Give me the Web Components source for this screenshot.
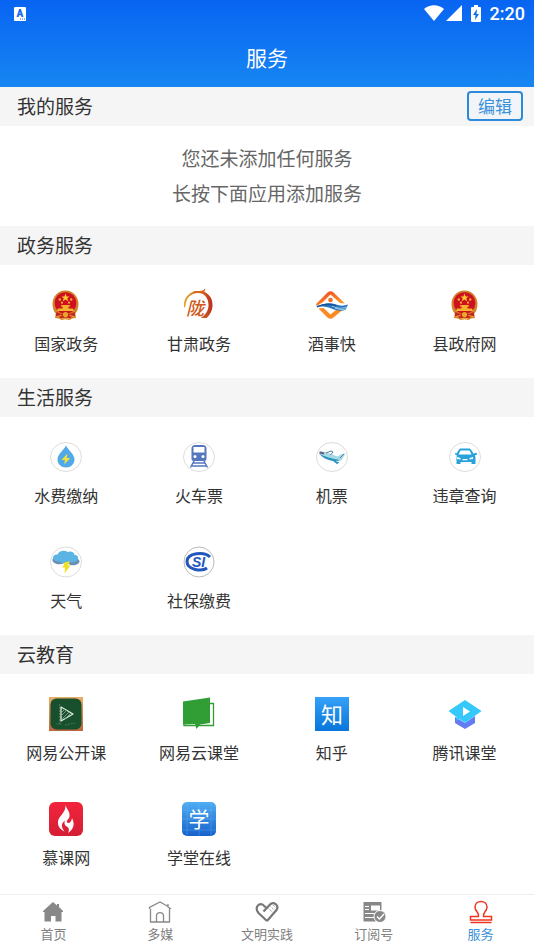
<!DOCTYPE html>
<html lang="zh-CN">
<head>
<meta charset="utf-8">
<meta name="viewport" content="width=device-width, initial-scale=1">
<title>服务</title>
<style>
  body {
    margin: 0;
    background: #fff;
    color: #333;
    font-family: "Noto Sans CJK SC", "Noto Sans", sans-serif;
  }
</style>
</head>
<body>

<!-- shared by both government entries -->
<svg width="0" height="0" style="display: none" aria-hidden="true">
  <symbol id="emblem" viewBox="0 0 34 34">
    <path d="M16.500 2.500C9 2.500 3.500 8.500 3.500 16c0 4.500 1.500 7.500 3.500 10l-1 4 4 .5 2.500 1.500 4-.7 4 .7 2.500-1.500 4-.5-1-4c2-2.500 3.500-5.500 3.500-10C29.500 8.500 24 2.500 16.500 2.500z" fill="#d0832a"/>
    <circle cx="16.500" cy="15" r="10.800" fill="#cf1020"/>
    <path d="M16.500 5.500l1.100 2.900h3l-2.300 1.900.9 2.900-2.700-1.700-2.700 1.700.9-2.900-2.300-1.900h3z" fill="#fccb2f"/>
    <g fill="#f3b32b">
      <circle cx="10.800" cy="11.500" r="1.200"/><circle cx="22.200" cy="11.500" r="1.200"/>
      <circle cx="13" cy="14.700" r="1.100"/><circle cx="20" cy="14.700" r="1.100"/>
      <path d="M12.500 17h8l1 1.500h-10zM13.500 18.500h6v2h-6zM9 20.500h15l1 2.500H8z"/>
    </g>
    <path d="M7.500 24l4.500 2 4.500-1 4.500 1 4.500-2 1 3.500-4 1.500-2 2-4-1-4 1-2-2-4-1.500z" fill="#c8251f"/>
    <circle cx="16.500" cy="26.500" r="2.600" fill="#e9a52d"/>
    <path d="M8 28.500l4.500-1M25 28.500l-4.500-1M12 31l4.500-1 4.500 1" fill="none" stroke="#efb33a"/>
  </symbol>
</svg>

<services-app>
  <app-header slot="header">服务</app-header>

  <service-section heading="我的服务">
    <edit-button slot="action">编辑</edit-button>
    <empty-note slot="note">
      <span>您还未添加任何服务</span>
      <span>长按下面应用添加服务</span>
    </empty-note>
  </service-section>

  <service-section heading="政务服务">
    <service-item label="国家政务">
      <svg viewBox="0 0 34 34"><use href="#emblem"/></svg>
    </service-item>
    <service-item label="甘肃政务">
      <svg viewBox="0 0 34 34">
        <defs><linearGradient id="ring"><stop offset="0" stop-color="#e2a32b"/><stop offset=".6" stop-color="#d66a20"/><stop offset="1" stop-color="#b92d1b"/></linearGradient></defs>
        <path d="M2 18C1.500 9 8 3 17 3c2 0 4 .3 5.500 1C27 6 30.500 10 30.500 17c0 6-3 10.500-6 13h-6c5-3 8-7.500 8-13C26.500 9.500 22 5 16 5 9 5 4 10 3.500 18L2.500 20z" fill="url(#ring)"/>
        <path d="M11 4.500c5-2 8 .5 11-2l-1 3" fill="none" stroke="#d8651e" stroke-width="1.500"/>
        <text x="4" y="27" font-size="18" font-weight="500" font-style="italic" fill="#cf5a20">陇</text>
      </svg>
    </service-item>
    <service-item label="酒事快">
      <svg viewBox="0 0 34 34">
        <defs><linearGradient id="diamond" x2=".7" y2="1"><stop offset="0" stop-color="#ee3f24"/><stop offset="1" stop-color="#ffa022"/></linearGradient></defs>
        <path d="M12.500 4.500Q15.500 2 18.500 4.500L30 15.500l-5-.5-9.500-8.500-8 8L1.500 18q-1-1.500.5-3z" fill="url(#diamond)"/>
        <path d="M3.500 20.500l5-.5 7 6.500 6-5 6.500 0-9.500 8q-3 2.500-6 0z" fill="#fb8a22"/>
        <circle cx="15.500" cy="12" r="2.300" fill="#f16d23"/>
        <path d="M1 19c7-4 14-5 20-2.500 4 1.500 8 1.500 12 0l-2.500 5.500c-5 1.500-9 .5-14-1.500-6-2-10-2.500-15.500-1.500z" fill="#2876bd"/>
        <path d="M17 18c5 2.500 10 3 14.500 1M20 20c4 1.500 8 2 11 1" fill="none" stroke="#b8def0" stroke-width=".8"/>
        <path d="M2 18.800c7-3 13-3.500 19-1" fill="none" stroke="#164f9d" stroke-width="1.500"/>
      </svg>
    </service-item>
    <service-item label="县政府网">
      <svg viewBox="0 0 34 34"><use href="#emblem"/></svg>
    </service-item>
  </service-section>

  <service-section heading="生活服务">
    <service-item label="水费缴纳">
      <svg viewBox="0 0 34 34">
        <ellipse cx="17" cy="17" rx="15.500" ry="14.500" fill="#fff" stroke="#ddd"/>
        <path d="M17 5.500c2 4.500 8.500 8.500 8.500 14 0 4.500-3.800 8-8.500 8s-8.500-3.500-8.500-8c0-5.500 6.500-9.500 8.500-14z" fill="#52a9e8"/>
        <path d="M18.500 13.500l-6 6.500h3.500l-.8 4.500 6-6.500h-3.500z" fill="#f4e13c"/>
      </svg>
    </service-item>
    <service-item label="火车票">
      <svg viewBox="0 0 34 34">
        <ellipse cx="17" cy="17" rx="15.500" ry="14.500" fill="#fff" stroke="#ddd"/>
        <path d="M13 5h8c2 0 3.500 1.500 3.500 3.500V19c0 1-1 2-2 2h-11c-1 0-2-1-2-2V8.500C9.500 6.500 11 5 13 5z" fill="#5477bd"/>
        <path d="M11.500 7h11v5.500h-11z" fill="#fff"/>
        <circle cx="13" cy="16.500" r="1.500" fill="#fff"/><circle cx="21" cy="16.500" r="1.500" fill="#fff"/>
        <path d="M12 21l-3.500 6.500M22 21l3.500 6.500M11.500 23h11M10 26h14" fill="none" stroke="#5477bd" stroke-width="1.500"/>
      </svg>
    </service-item>
    <service-item label="机票">
      <svg viewBox="0 0 34 34">
        <ellipse cx="17" cy="17" rx="15.500" ry="14.500" fill="#fff" stroke="#ddd"/>
        <path d="M4 12c1.500-1.500 3.500-.5 6 0l12.500 4.500 4-2.500 4-.5-4 6.500c-2 1.500-4 1-6 .5L8 16z" fill="#a5d8e2"/>
        <path d="M4 13.500c5 3 13 5.500 21 6.500-5 2.500-12.500.5-18-3.500zM16 19.500l8.500 3-2.500 1.500z" fill="#258fbf"/>
        <path d="M11 13l5-2 2 1-2.500 3M25 18l4-4" fill="none" stroke="#4f7f9f"/>
        <path d="M4.500 12.500l4.500 1" stroke="#625f85" stroke-width="2"/>
      </svg>
    </service-item>
    <service-item label="违章查询">
      <svg viewBox="0 0 34 34">
        <ellipse cx="17" cy="17" rx="15.500" ry="14.500" fill="#fff" stroke="#ddd"/>
        <path d="M8.500 13.500L11 9.500C11.500 9 12 8.500 13 8.500h8c1 0 1.500.5 2 1l2.500 4 3-.8.5 1.800-2 1 .5 2V24h-4v-2h-11v2h-4v-6.500l.5-2-2-1 .5-1.800z" fill="#27a2dc"/>
        <path d="M12.500 10.500h9l2 4h-13zM9 17l3.500 1v1.500L9 19zM25 17l-3.500 1v1.500L25 19zM14.500 19h5v1.300h-5z" fill="#fff"/>
      </svg>
    </service-item>
    <service-item label="天气">
      <svg viewBox="0 0 34 34">
        <ellipse cx="17" cy="17" rx="15.500" ry="15" fill="#fff" stroke="#ddd"/>
        <path d="M17 15c3-2 13-3 13.500 1 0 3-4 5-9.500 4zM3.500 14c3-2 8 0 11 4.500-4 2-12 0-11-4.500z" fill="#6b8fae"/>
        <path d="M4 13c0-2.500 2-4 4.500-3.500 1-3.500 7-5 10-2.500 3-1.500 7 0 7 3 3 0 4 2 3.500 4-.5 2.500-5 4-10 3-3 2-7.500 1.500-8.500-.5-3.500.5-6.500-1-6.500-3.500z" fill="#5bb4e3"/>
        <path d="M16 17l5-.5-2 4h2.500L15.500 28.500l.5-6H13.500z" fill="#f2df25"/>
      </svg>
    </service-item>
    <service-item label="社保缴费">
      <svg viewBox="0 0 34 34">
        <circle cx="17" cy="17" r="15" fill="#fff" stroke="#bbb"/>
        <path d="M28 12C22 6 5 8 5 16.500 5 25 20 27 25 23" fill="none" stroke="#2357bd" stroke-width="3"/>
        <text x="10" y="22" font-family="Liberation Sans, sans-serif" font-size="14" font-weight="700" font-style="italic" fill="#2357bd">SI</text>
      </svg>
    </service-item>
  </service-section>

  <service-section heading="云教育">
    <service-item label="网易公开课">
      <svg viewBox="0 0 34 34">
        <defs><linearGradient id="wood" x2="0" y2="1"><stop offset="0" stop-color="#e9ae68"/><stop offset="1" stop-color="#b9653e"/></linearGradient></defs>
        <path d="M0 0h34v34H0z" fill="url(#wood)"/>
        <rect x="1.500" y="1.500" width="31" height="31" rx="6" fill="#184f2d"/>
        <path d="M12 10v14l12-7z" fill="none" stroke="#dce9df" stroke-width="1.300" stroke-linejoin="round"/>
        <path d="M13 15l3-3M13 18l5-5M13 22l7-7M16 22l6-6" stroke="#8dac95" stroke-width=".8"/>
        <path d="M10.500 7v20M7.500 27h5M16 28l10-2" stroke="#55805f" stroke-width=".8" stroke-dasharray="2 1"/>
      </svg>
    </service-item>
    <service-item label="网易云课堂">
      <svg viewBox="0 0 34 34">
        <path d="M27 6.500h4.500V28.500H2v-3" fill="none" stroke="#319e35" stroke-width="1.300"/>
        <path d="M1 4.500L28 .5v25.500l-10 1.500-3.500 4.500-1.500-5L1 27.500z" fill="#319e35"/>
      </svg>
    </service-item>
    <service-item label="知乎">
      <svg viewBox="0 0 34 34">
        <defs><linearGradient id="sky" x2="0" y2="1"><stop offset="0" stop-color="#36a1f8"/><stop offset="1" stop-color="#0876da"/></linearGradient></defs>
        <path d="M0 0h34v34H0z" fill="url(#sky)"/>
        <text x="17" y="26" text-anchor="middle" font-size="22" fill="#fff">知</text>
      </svg>
    </service-item>
    <service-item label="腾讯课堂">
      <svg viewBox="0 0 34 34">
        <path d="M7 20l10 6 10-7v7l-10 6-10-6z" fill="#637cf4"/>
        <path d="M17 3l16.500 11L17 26l-6-4-2.500 2v-4L.5 14z" fill="#35c8fa"/>
        <path d="M15 10v9l7-4.500z" fill="#fff"/>
      </svg>
    </service-item>
    <service-item label="慕课网">
      <svg viewBox="0 0 34 34">
        <defs><linearGradient id="ember" x2="0" y2="1"><stop offset="0" stop-color="#f2243c"/><stop offset="1" stop-color="#d51e34"/></linearGradient></defs>
        <rect width="34" height="34" rx="6" fill="url(#ember)"/>
        <path d="M16.500 3c1 4 4.500 6 4 11 0 3-3.500 4-2.500 6.500 2 1.500 4.500-.5 5-4.500 3 6 2 11-4 15 1.500-3 1-5-.5-6-2-1-4-3-2.500-6.500-4 3-4 6.500-.5 11-4-2-7-5-6.500-10C9.500 14 17 11 16.500 3z" fill="#fff"/>
      </svg>
    </service-item>
    <service-item label="学堂在线">
      <svg viewBox="0 0 34 34">
        <defs><linearGradient id="azure" x2="0" y2="1"><stop offset="0" stop-color="#50adf3"/><stop offset="1" stop-color="#1662cb"/></linearGradient></defs>
        <rect width="34" height="34" rx="5" fill="url(#azure)"/>
        <path d="M5 0v34M29 0v34M17 0v34M0 8h34M0 17h34M0 28h34" stroke="#78c2f7" stroke-width=".5" opacity=".6"/>
        <text x="17" y="25" text-anchor="middle" font-size="21" fill="#fff">学</text>
      </svg>
    </service-item>
  </service-section>

  <tab-bar slot="footer">
    <tab-link label="首页">
      <svg viewBox="0 0 24 24"><path d="M12 2L2 11v1h1.500v9.500H10V16h4.500v5.500h6V12H22v-1l-4-4V4h-2v1.500z" fill="#888"/></svg>
    </tab-link>
    <tab-link label="多媒">
      <svg viewBox="0 0 24 24"><path d="M1.500 9V7.500L12 2l8 4.500V4M20 5v2l2.500 1.500V9M2.500 9v13h19V8.500M8.500 22v-6c0-4.500 7-4.500 7 0v6" fill="none" stroke="#888" stroke-width="1.300"/></svg>
    </tab-link>
    <tab-link label="文明实践">
      <svg viewBox="0 0 24 24">
        <path d="M12 21L3.500 13C-.5 8 3 3 7.500 4.500l4 3.500" fill="none" stroke="#777" stroke-width="2.200" stroke-linejoin="round"/>
        <path d="M8.500 11.500l6-6.500c4-4.500 10 .5 7 5L12 21" fill="none" stroke="#777" stroke-width="2.200"/>
        <path d="M13.500 8.500l4.500 4M15.500 6.500l4.500 4M18 5l3 3" stroke="#888" stroke-dasharray="1 1"/>
      </svg>
    </tab-link>
    <tab-link label="订阅号">
      <svg viewBox="0 0 24 24">
        <path d="M1.500 2h18v12l-6 7.500h-12z" fill="#888"/>
        <path d="M9 5.500h9v5H9zM3 6h4v1H3zM3 9h4v1H3zM3 13h14v1H3zM3 17h9v1H3z" fill="#fff"/>
        <circle cx="18" cy="16.500" r="6" fill="#888" stroke="#fff"/>
        <path d="M15 16.500l2.500 2.500 4.500-5" fill="none" stroke="#fff" stroke-width="1.500"/>
      </svg>
    </tab-link>
    <tab-link label="服务" active>
      <svg viewBox="0 0 24 24"><path d="M9.500 16.500c1-4-3.500-5-3.500-9.500 0-7.500 12-7.500 12 0 0 4.500-4.500 5.500-3.500 9.500h8V20h-21v-3.500zM1.500 22.500h21" fill="none" stroke="#ee3620" stroke-width="1.500"/></svg>
    </tab-link>
  </tab-bar>
</services-app>

<script>
class ServicesApp extends HTMLElement {
  constructor() {
    super();
    this.attachShadow({ mode: 'open' });
  }

  connectedCallback() {
    this.shadowRoot.innerHTML = `
      <style>
        :host {
          display: flex;
          flex-direction: column;
          min-height: 100vh;
        }

        main {
          flex: 1;
        }
      </style>

      <slot name="header"></slot>
      <main><slot></slot></main>
      <slot name="footer"></slot>
    `;
  }
}

class AppHeader extends HTMLElement {
  constructor() {
    super();
    this.attachShadow({ mode: 'open' });
  }

  connectedCallback() {
    this.shadowRoot.innerHTML = `
      <style>
        :host {
          display: block;
          color: #fff;
          background: linear-gradient(180deg, #0864f2, #1786f2);
        }

        .status {
          display: flex;
          align-items: center;
          height: 27px;
          padding: 0 9px 0 14px;
          font: 500 18px/27px Roboto, sans-serif;
        }

        .input {
          margin-right: auto;
        }

        .battery {
          margin: 0 8px;
        }

        svg {
          display: block;
        }

        h1 {
          margin: 0;
          padding: 14px 0;
          font-size: 21px;
          font-weight: 400;
          line-height: 32px;
          text-align: center;
        }
      </style>

      <div class="status">
        <svg class="input" width="12" height="14" viewBox="0 0 12 14">
          <rect width="12" height="14" rx="1" fill="#fff"/>
          <text x="6" y="10" text-anchor="middle" font-family="Roboto" font-size="10" font-weight="900" fill="#1468f0">A</text>
          <path d="M6 12h5" stroke="#1468f0" stroke-dasharray="1 1"/>
        </svg>
        <svg width="38" height="17" viewBox="0 0 38 17" fill="#fff">
          <path d="M0 4C6-1 14-1 20 4L10 16zM38 0v16H22z"/>
        </svg>
        <svg class="battery" width="12" height="18" viewBox="0 0 12 18">
          <path d="M4 0h4v2h2q1 0 1 1v13q0 1-1 1H2q-1 0-1-1V3q0-1 1-1h2z" fill="#fff"/>
          <path d="M7 4l-4 6h2.500L5 15l4-6H6.500z" fill="#0d6af0"/>
        </svg>
        <span>2:20</span>
      </div>
      <h1><slot></slot></h1>
    `;
  }
}

class ServiceSection extends HTMLElement {
  constructor() {
    super();
    this.attachShadow({ mode: 'open' });
  }

  connectedCallback() {
    this.shadowRoot.innerHTML = `
      <style>
        :host {
          display: block;
        }

        .bar {
          display: flex;
          align-items: center;
          justify-content: space-between;
          padding: 4px 11px 5px 17px;
          min-height: 30px;
          background: #f5f5f5;
        }

        h2 {
          margin: 0;
          font-size: 19px;
          font-weight: 400;
          line-height: 28px;
        }

        .grid {
          display: grid;
          grid-template-columns: repeat(4, 1fr);
          padding: 4px 3px 4px 0;
        }
      </style>

      <section>
        <div class="bar">
          <h2>${this.getAttribute('heading')}</h2>
          <slot name="action"></slot>
        </div>
        <slot name="note"></slot>
        ${this.querySelector('service-item') ? '<div class="grid"><slot></slot></div>' : ''}
      </section>
    `;
  }
}

class EditButton extends HTMLElement {
  constructor() {
    super();
    this.attachShadow({ mode: 'open' });
  }

  connectedCallback() {
    this.shadowRoot.innerHTML = `
      <style>
        :host {
          display: block;
        }

        button {
          display: block;
          padding: 0 9px;
          border: 2px solid #2b8bd9;
          border-radius: 4px;
          background: #f1f5f9;
          color: #3b91d8;
          font: inherit;
          font-size: 17px;
          line-height: 26px;
          cursor: pointer;
        }
      </style>

      <button type="button"><slot></slot></button>
    `;
  }
}

class EmptyNote extends HTMLElement {
  constructor() {
    super();
    this.attachShadow({ mode: 'open' });
  }

  connectedCallback() {
    this.shadowRoot.innerHTML = `
      <style>
        :host {
          display: block;
          padding: 14px 0 16px;
          color: #666;
          font-size: 19px;
          line-height: 35px;
          text-align: center;
        }

        ::slotted(span) {
          display: block;
        }
      </style>

      <slot></slot>
    `;
  }
}

class ServiceItem extends HTMLElement {
  constructor() {
    super();
    this.attachShadow({ mode: 'open' });
  }

  connectedCallback() {
    this.shadowRoot.innerHTML = `
      <style>
        :host {
          display: block;
        }

        a {
          display: flex;
          flex-direction: column;
          align-items: center;
          gap: 10px;
          padding: 19px 0 20px;
          color: inherit;
          font-size: 16px;
          line-height: 22px;
          text-decoration: none;
        }

        ::slotted(svg) {
          display: block;
          width: 34px;
          height: 34px;
        }
      </style>

      <a href="#">
        <slot></slot>
        <span>${this.getAttribute('label')}</span>
      </a>
    `;
  }
}

class TabBar extends HTMLElement {
  constructor() {
    super();
    this.attachShadow({ mode: 'open' });
  }

  connectedCallback() {
    this.shadowRoot.innerHTML = `
      <style>
        :host {
          display: block;
          border-top: 1px solid #eee;
          background: #fff;
        }

        nav {
          display: grid;
          grid-template-columns: repeat(5, 1fr);
        }
      </style>

      <nav><slot></slot></nav>
    `;
  }
}

class TabLink extends HTMLElement {
  constructor() {
    super();
    this.attachShadow({ mode: 'open' });
  }

  connectedCallback() {
    this.shadowRoot.innerHTML = `
      <style>
        :host {
          display: block;
          color: #808080;
        }

        :host([active]) {
          color: #3b91d8;
        }

        a {
          display: flex;
          flex-direction: column;
          align-items: center;
          padding: 5px 0 6px;
          color: inherit;
          font-size: 13px;
          line-height: 20px;
          text-decoration: none;
        }

        ::slotted(svg) {
          display: block;
          width: 24px;
          height: 24px;
        }
      </style>

      <a href="#">
        <slot></slot>
        <span>${this.getAttribute('label')}</span>
      </a>
    `;
  }
}

customElements.define('services-app', ServicesApp);
customElements.define('app-header', AppHeader);
customElements.define('service-section', ServiceSection);
customElements.define('edit-button', EditButton);
customElements.define('empty-note', EmptyNote);
customElements.define('service-item', ServiceItem);
customElements.define('tab-bar', TabBar);
customElements.define('tab-link', TabLink);
</script>
</body>
</html>
